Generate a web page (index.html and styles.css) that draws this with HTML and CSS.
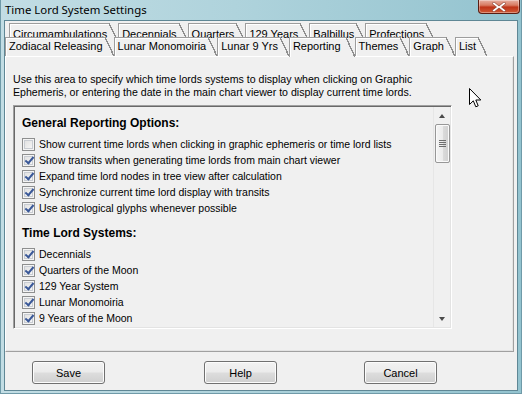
FILE: index.html
```html
<!DOCTYPE html>
<html lang="en">
<head>
<meta charset="UTF-8">
<title>Time Lord System Settings</title>
<link rel="stylesheet" href="styles.css">
</head>
<body>
<div class="window">
  <div class="titlebar">
    <span class="title">Time Lord System Settings</span>
    <button class="close-btn">
      <svg width="14" height="10" viewBox="0 0 14 10"><path d="M2 0 L7 4 L12 0 L14 1.5 L9.5 5 L14 8.5 L12 10 L7 6 L2 10 L0 8.5 L4.5 5 L0 1.5 Z" fill="#fff" stroke="#7a2a1a" stroke-width="0.6"/></svg>
    </button>
  </div>

  <div class="client">
    <div class="tabs">
      <div class="tab-row row-back">
        <div class="tab">Circumambulations</div>
        <div class="tab">Decennials</div>
        <div class="tab">Quarters</div>
        <div class="tab">129 Years</div>
        <div class="tab">Balbillus</div>
        <div class="tab">Profections</div>
      </div>
      <div class="tab-row row-front">
        <div class="tab">Zodiacal Releasing</div>
        <div class="tab">Lunar Monomoiria</div>
        <div class="tab">Lunar 9 Yrs</div>
        <div class="tab active">Reporting</div>
        <div class="tab">Themes</div>
        <div class="tab">Graph</div>
        <div class="tab">List</div>
      </div>
    </div>

    <div class="panel">
      <p class="desc">Use this area to specify which time lords systems to display when clicking on Graphic<br>Ephemeris, or entering the date in the main chart viewer to display current time lords.</p>

      <div class="list">
        <div class="list-body">
          <h3 class="group-title">General Reporting Options:</h3>
          <label class="cb-row"><span class="cb"></span>Show current time lords when clicking in graphic ephemeris or time lord lists</label>
          <label class="cb-row"><span class="cb on"></span>Show transits when generating time lords from main chart viewer</label>
          <label class="cb-row"><span class="cb on"></span>Expand time lord nodes in tree view after calculation</label>
          <label class="cb-row"><span class="cb on"></span>Synchronize current time lord display with transits</label>
          <label class="cb-row"><span class="cb on"></span>Use astrological glyphs whenever possible</label>

          <h3 class="group-title second">Time Lord Systems:</h3>
          <label class="cb-row"><span class="cb on"></span>Decennials</label>
          <label class="cb-row"><span class="cb on"></span>Quarters of the Moon</label>
          <label class="cb-row"><span class="cb on"></span>129 Year System</label>
          <label class="cb-row"><span class="cb on"></span>Lunar Monomoiria</label>
          <label class="cb-row"><span class="cb on"></span>9 Years of the Moon</label>
        </div>
        <div class="scrollbar">
          <span class="sb-btn"><i class="arrow-up"></i></span>
          <div class="sb-track"><div class="sb-thumb"><i class="grip"></i></div></div>
          <span class="sb-btn"><i class="arrow-down"></i></span>
        </div>
      </div>
    </div>

    <div class="buttons">
      <button class="btn btn-save">Save</button>
      <button class="btn btn-help">Help</button>
      <button class="btn btn-cancel">Cancel</button>
    </div>
  </div>

  <svg class="cursor" width="13" height="20" viewBox="0 0 13 20"><path d="M0.5 0.5 L0.5 16.5 L4.3 12.8 L6.8 18.8 L9.2 17.8 L6.8 12 L11.8 12 Z" fill="#fff" stroke="#000" stroke-width="1" stroke-linejoin="round"/></svg>
</div>
</body>
</html>
```

FILE: styles.css
```css
* {
margin: 0;
padding: 0;
box-sizing: border-box;
}
body, html {
width: 522px;
height: 394px;
overflow: hidden;
}
body {
font-family: "Liberation Sans", Arial, sans-serif;
font-size: 11px;
color: #000;
background: #9fc9d4;
}

.window {
position: relative;
width: 522px;
height: 394px;
display: flex;
flex-direction: column;
padding: 0 4px 3px 4px;
background: linear-gradient(to right, #c2dde4 0%, #afd3dc 45%, #93c3cf 100%);
box-shadow: inset 1px 0 0 #6f9aa8, inset -1px 0 0 #6f9aa8, inset 0 -1px 0 #6f9aa8;
}

.titlebar {
height: 20px;
display: flex;
justify-content: space-between;
align-items: flex-start;
}
.title {
font-family: "Noto Sans", "Open Sans", sans-serif;
font-size: 11.4px;
line-height: 19px;
padding-left: 1px;
}
.close-btn {
width: 42px;
height: 14px;
margin-right: -2px;
display: flex;
align-items: center;
justify-content: center;
border: 1px solid #5a1d12;
border-top: none;
border-radius: 0 0 4px 4px;
background: linear-gradient(#e7b0a2 0%, #d87b62 40%, #bf3418 55%, #cf5a36 100%);
box-shadow: inset 0 0 0 1px rgba(255,255,255,0.35);
}

.client {
flex: 1;
display: flex;
flex-direction: column;
background: #f0f0f0;
border: 1px solid #5f8795;
padding: 2px 3px 0 0;
}

/* tabs */
.tabs {
display: flex;
flex-direction: column;
}
.tab-row {
display: flex;
height: 19px;
}
.row-back {
padding-left: 4px;
}
.row-back .tab {
padding-top: 5px;
}
.row-front {
position: relative;
z-index: 1;
margin-top: -5px;
}
.tab {
position: relative;
z-index: 0;
height: 19px;
padding: 3px 11px 0 4px;
line-height: 13px;
white-space: nowrap;
}
.tab::before {
content: "";
position: absolute;
z-index: -1;
left: 0;
top: 0;
bottom: 0;
right: 8px;
background: #f0f0f0;
border-left: 1px solid #9d9d9d;
border-top: 1px solid #9d9d9d;
box-shadow: inset 1px 1px 0 #fff;
}
.tab::after {
content: "";
position: absolute;
z-index: -1;
right: 0;
top: 0;
bottom: 0;
width: 9px;
background: linear-gradient(to top right, #f0f0f0 0, #f0f0f0 calc(50% - 0.8px), #8e8e8e calc(50% - 0.8px), #8e8e8e calc(50% + 0.6px), transparent calc(50% + 0.6px));
}
.tab.active {
height: 20px;
padding-right: 14px;
}

/* panel */
.panel {
height: 296px;
border: 1px solid;
border-color: #fff #a0a0a0 #a0a0a0 #fff;
box-shadow: inset -1px -1px 0 #e3e3e3;
padding: 16px 7px 0 7px;
}
.desc {
font-size: 10.6px;
line-height: 13px;
}
.list {
display: flex;
width: 439px;
height: 224px;
margin-top: 6px;
border: 1px solid;
border-color: #a0a0a0 #fff #fff #a0a0a0;
box-shadow: inset 1px 1px 0 #696969, inset -1px -1px 0 #e3e3e3;
}
.list-body {
flex: 1;
padding: 9px 0 0 8px;
}
.group-title {
font-size: 12px;
font-weight: bold;
line-height: 16px;
margin-bottom: 5px;
}
.group-title.second {
margin-top: 9px;
}
.cb-row {
display: flex;
align-items: center;
gap: 4px;
height: 16px;
font-size: 10.5px;
white-space: nowrap;
}
.cb {
position: relative;
flex: none;
width: 13px;
height: 13px;
border: 1px solid #8e8f8f;
background: linear-gradient(135deg, #dcdcdc, #fbfbfb);
box-shadow: inset 0 0 0 1px #f4f4f4, inset 0 0 0 2px #c8ccd2;
}
.cb.on::after {
content: "";
position: absolute;
left: 3.5px;
top: 0.5px;
width: 3px;
height: 7px;
border-right: 2px solid #3a5898;
border-bottom: 2px solid #3a5898;
transform: rotate(40deg);
}

/* scrollbar */
.scrollbar {
width: 17px;
margin: 1px 1px 1px 0;
display: flex;
flex-direction: column;
background: #f0f0f0;
border-left: 1px solid #e6e6e6;
}
.sb-btn {
height: 17px;
display: flex;
align-items: center;
justify-content: center;
}
.arrow-up, .arrow-down {
width: 0;
height: 0;
border-left: 3.5px solid transparent;
border-right: 3.5px solid transparent;
}
.arrow-up {
border-bottom: 4px solid #4a4a4a;
}
.arrow-down {
border-top: 4px solid #4a4a4a;
}
.sb-track {
flex: 1;
padding-left: 1px;
}
.sb-thumb {
height: 39px;
width: 15px;
display: flex;
align-items: center;
justify-content: center;
border: 1px solid #979797;
border-radius: 2px;
background: linear-gradient(to right, #f4f4f4 0%, #ececec 50%, #dcdcdc 50%, #d0d0d0 100%);
box-shadow: inset 0 0 0 1px #fafafa;
}
.grip {
width: 7px;
height: 7px;
background: repeating-linear-gradient(#6e6e6e 0, #6e6e6e 1px, transparent 1px, transparent 2px);
}

/* dialog buttons */
.buttons {
display: flex;
padding-top: 9px;
}
.btn {
width: 73px;
height: 23px;
font-family: "Liberation Sans", Arial, sans-serif;
font-size: 11px;
color: #000;
border: 1px solid #707070;
border-radius: 3px;
background: linear-gradient(#f2f2f2 0%, #ebebeb 48%, #dddddd 52%, #cfcfcf 100%);
box-shadow: inset 0 0 0 1px #fcfcfc;
}
.btn-save {
margin-left: 27px;
}
.btn-help {
margin-left: 99px;
}
.btn-cancel {
margin-left: 87px;
}

.cursor {
position: absolute;
left: 469px;
top: 88px;
}
```
